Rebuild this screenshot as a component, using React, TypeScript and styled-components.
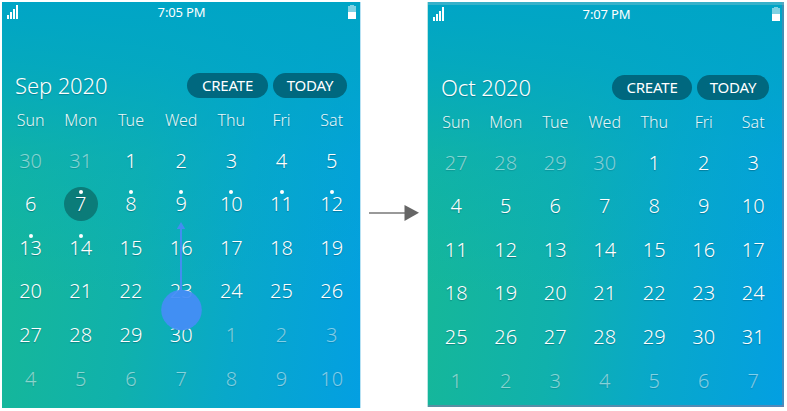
import React from "react";
import styled, { createGlobalStyle, css } from "styled-components";

const GlobalStyle = createGlobalStyle`
  * { box-sizing: border-box; }
  body { margin: 0; background: #fff; font-family: "Noto Sans", "Open Sans", sans-serif; }
`;

const Board = styled.main`
  display: flex;
  align-items: flex-start;
  width: 787px;
  height: 411px;
  padding: 2px 0 0 2px;
  overflow: hidden;
`;

const Screen = styled.section<{ $framed?: boolean }>`
  flex: none;
  position: relative;
  display: flex;
  flex-direction: column;
  width: ${(p) => (p.$framed ? 356 : 358)}px;
  height: ${(p) => (p.$framed ? 405 : 406)}px;
  padding-top: ${(p) => (p.$framed ? 2 : 0)}px;
  color: #fff;
  background:
    linear-gradient(180deg, #00a5c6 0%, rgba(0, 165, 200, 0.78) 16%, rgba(0, 165, 205, 0.3) 38%, rgba(0, 165, 210, 0) 72%),
    linear-gradient(97deg, #17b994 0%, #10b1ac 40%, #08a8ca 67%, #039fe2 100%);
  ${(p) =>
    p.$framed
      ? css`
          box-shadow: inset 0 3px rgba(110, 190, 205, 0.5), inset -2px 0 rgba(115, 125, 165, 0.55),
            inset 0 -2px rgba(125, 125, 165, 0.65), -1px 0 #b9e6e2;
        `
      : css`
          box-shadow: 1px 0 #b9e2f3;
        `}
`;

const StatusBar = styled.header`
  display: grid;
  grid-template-columns: 1fr auto 1fr;
  height: 22px;
  padding: 3px 4px 0 5px;
`;

const Clock = styled.time`
  font-size: 13px;
  line-height: 15px;
  letter-spacing: -0.15px;
`;

const BatteryIcon = styled.svg`
  justify-self: end;
`;

const TitleRow = styled.div<{ $tight?: boolean }>`
  display: flex;
  align-items: center;
  height: 28px;
  margin-top: 47px;
  padding: 0 ${(p) => (p.$tight ? 15 : 13)}px 0 13px;
`;

const Title = styled.h1`
  flex: 1;
  margin: 0;
  font-size: 22px;
  line-height: 28px;
  font-weight: 300;
  letter-spacing: -0.1px;
  white-space: nowrap;
  text-shadow: 0 1px 1px rgba(0, 60, 80, 0.35);
`;

const Pill = styled.button<{ $width: number }>`
  width: ${(p) => p.$width}px;
  height: 25px;
  margin: 0 0 0 5px;
  padding: 0;
  border: 0;
  border-radius: 13px;
  color: #fff;
  background: #00687f;
  font: 400 15px/25px "Noto Sans", sans-serif;
  letter-spacing: -0.2px;
`;

const Grid = styled.div<{ $column: number; $left: number }>`
  display: grid;
  grid-template-columns: repeat(7, ${(p) => p.$column}px);
  padding-left: ${(p) => p.$left}px;
`;

const Weekday = styled.span`
  height: 40px;
  padding-top: 9px;
  text-align: center;
  font-size: 16px;
  line-height: 24px;
  font-weight: 300;
  opacity: 0.9;
  text-shadow: 0 1px 1px rgba(0, 60, 80, 0.35);
`;

const Day = styled.span<{ $muted: boolean }>`
  display: flex;
  align-items: center;
  justify-content: center;
  height: 43.55px;
  font-size: 20px;
  line-height: 28px;
  font-weight: 300;
  color: ${(p) => (p.$muted ? "rgba(255,255,255,0.5)" : "#fff")};
  text-shadow: 0 1px 1px rgba(0, 60, 80, ${(p) => (p.$muted ? 0.2 : 0.4)});
`;

const DayMark = styled.span<{ $selected: boolean; $event: boolean }>`
  position: relative;
  display: flex;
  align-items: center;
  justify-content: center;
  width: 34px;
  height: 34px;
  border-radius: 50%;
  background: ${(p) => (p.$selected ? "#0b7c79" : "transparent")};
  ${(p) =>
    p.$event &&
    css`
      &::before {
        content: "";
        position: absolute;
        top: 3px;
        left: 15px;
        width: 4px;
        height: 4px;
        border-radius: 50%;
        background: #fff;
      }
    `}
`;

const Swipe = styled.svg`
  position: absolute;
  left: 158px;
  top: 218px;
`;

const NextArrow = styled.svg`
  flex: none;
  margin: 201px 9px 0 8px;
`;

const weekdays = ["Sun", "Mon", "Tue", "Wed", "Thu", "Fri", "Sat"];

function range(from: number, to: number) {
  return Array.from({ length: to - from + 1 }, (_, i) => from + i);
}

type MonthProps = {
  title: string;
  time: string;
  before: number[];
  length: number;
  after: number;
  column: number;
  left: number;
  selected?: number;
  events?: number[];
  framed?: boolean;
  children?: React.ReactNode;
};

function Month({ title, time, before, length, after, column, left, selected, events = [], framed, children }: MonthProps) {
  const days = [
    ...before.map((n) => ({ n, muted: true })),
    ...range(1, length).map((n) => ({ n, muted: false })),
    ...range(1, after).map((n) => ({ n, muted: true })),
  ];
  return (
    <Screen $framed={framed}>
      <StatusBar>
        <svg width="12" height="15" viewBox="0 0 12 15" fill="#fff">
          <path d="M0 10h2v4H0zM3 7h2v7H3zM6 4h2v10H6zM9 0h2v14H9z" />
        </svg>
        <Clock>{time}</Clock>
        <BatteryIcon width="8" height="15" viewBox="0 0 8 15">
          <path d="M2 0h4v1h2v6H0V1h2z" fill="#fff" fillOpacity=".5" />
          <path d="M0 7h8v7H0z" fill="#fff" />
        </BatteryIcon>
      </StatusBar>
      <TitleRow $tight={framed}>
        <Title>{title}</Title>
        <Pill $width={framed ? 80 : 81}>CREATE</Pill>
        <Pill $width={framed ? 72 : 74}>TODAY</Pill>
      </TitleRow>
      <Grid $column={column} $left={left}>
        {weekdays.map((name) => (
          <Weekday key={name}>{name}</Weekday>
        ))}
        {days.map(({ n, muted }, i) => (
          <Day key={i} $muted={muted}>
            <DayMark $selected={!muted && n === selected} $event={!muted && events.includes(n)}>
              {n}
            </DayMark>
          </Day>
        ))}
      </Grid>
      {children}
    </Screen>
  );
}

export default function App() {
  return (
    <>
      <GlobalStyle />
      <Board>
        <Month
          title="Sep 2020"
          time="7:05 PM"
          before={[30, 31]}
          length={30}
          after={10}
          column={50.2}
          left={3.5}
          selected={7}
          events={[7, 8, 9, 10, 11, 12, 13, 14]}
        >
          <Swipe width="42" height="112" viewBox="0 0 42 112">
            <path d="M20 7h2v63h-2z" fill="#438df0" />
            <path d="M21 2l4.2 7h-8.4z" fill="#438df0" />
            <circle cx="21.5" cy="90" r="20.3" fill="#458df6" fillOpacity=".95" />
          </Swipe>
        </Month>
        <NextArrow width="51" height="20" viewBox="0 0 51 20">
          <path d="M1 10h37" stroke="#777" strokeWidth="1.4" />
          <path d="M36.5 2v16L51 9.8z" fill="#666" />
        </NextArrow>
        <Month
          title="Oct 2020"
          time="7:07 PM"
          before={[27, 28, 29, 30]}
          length={31}
          after={7}
          column={49.5}
          left={3.5}
          framed
        />
      </Board>
    </>
  );
}
